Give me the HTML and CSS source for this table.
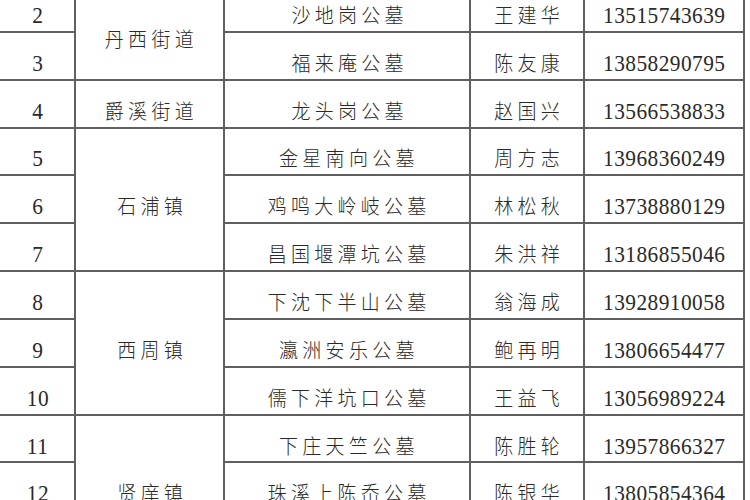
FILE: index.html
```html
<!DOCTYPE html>
<html lang="zh">
<head>
<meta charset="utf-8">
<link rel="stylesheet" href="styles.css">
</head>
<body>
<div class="page">
<table class="list">
<colgroup>
<col class="c1"><col class="c2"><col class="c3"><col class="c4"><col class="c5">
</colgroup>
<tbody>
<tr><td class="num"><span class="t">2</span></td><td class="zh" rowspan="2"><span class="t">丹西街道</span></td><td class="zh"><span class="t">沙地岗公墓</span></td><td class="zh"><span class="t">王建华</span></td><td class="num"><span class="t">13515743639</span></td></tr>
<tr><td class="num"><span class="t">3</span></td><td class="zh"><span class="t">福来庵公墓</span></td><td class="zh"><span class="t">陈友康</span></td><td class="num"><span class="t">13858290795</span></td></tr>
<tr><td class="num"><span class="t">4</span></td><td class="zh"><span class="t">爵溪街道</span></td><td class="zh"><span class="t">龙头岗公墓</span></td><td class="zh"><span class="t">赵国兴</span></td><td class="num"><span class="t">13566538833</span></td></tr>
<tr><td class="num"><span class="t">5</span></td><td class="zh" rowspan="3"><span class="t">石浦镇</span></td><td class="zh"><span class="t">金星南向公墓</span></td><td class="zh"><span class="t">周方志</span></td><td class="num"><span class="t">13968360249</span></td></tr>
<tr><td class="num"><span class="t">6</span></td><td class="zh"><span class="t">鸡鸣大岭岐公墓</span></td><td class="zh"><span class="t">林松秋</span></td><td class="num"><span class="t">13738880129</span></td></tr>
<tr><td class="num"><span class="t">7</span></td><td class="zh"><span class="t">昌国堰潭坑公墓</span></td><td class="zh"><span class="t">朱洪祥</span></td><td class="num"><span class="t">13186855046</span></td></tr>
<tr><td class="num"><span class="t">8</span></td><td class="zh" rowspan="3"><span class="t">西周镇</span></td><td class="zh"><span class="t">下沈下半山公墓</span></td><td class="zh"><span class="t">翁海成</span></td><td class="num"><span class="t">13928910058</span></td></tr>
<tr><td class="num"><span class="t">9</span></td><td class="zh"><span class="t">瀛洲安乐公墓</span></td><td class="zh"><span class="t">鲍再明</span></td><td class="num"><span class="t">13806654477</span></td></tr>
<tr><td class="num"><span class="t">10</span></td><td class="zh"><span class="t">儒下洋坑口公墓</span></td><td class="zh"><span class="t">王益飞</span></td><td class="num"><span class="t">13056989224</span></td></tr>
<tr><td class="num"><span class="t">11</span></td><td class="zh" rowspan="3"><span class="t">贤庠镇</span></td><td class="zh"><span class="t">下庄天竺公墓</span></td><td class="zh"><span class="t">陈胜轮</span></td><td class="num"><span class="t">13957866327</span></td></tr>
<tr><td class="num"><span class="t">12</span></td><td class="zh"><span class="t">珠溪上陈岙公墓</span></td><td class="zh"><span class="t">陈银华</span></td><td class="num"><span class="t">13805854364</span></td></tr>
<tr><td class="num">&nbsp;</td><td class="zh">&nbsp;</td><td class="zh">&nbsp;</td><td class="num">&nbsp;</td></tr>
</tbody>
</table>
</div>
</body>
</html>
```
FILE: styles.css
```css
html, body {
  margin: 0;
  padding: 0;
  background: #ffffff;
}
.page {
  width: 750px;
  height: 500px;
  overflow: hidden;
}
.list {
  border-collapse: collapse;
  table-layout: fixed;
  width: 744px;
  margin-top: -17px;
  margin-left: -1px;
}
.c1 { width: 75px; }
.c2 { width: 149px; }
.c3 { width: 246px; }
.c4 { width: 114px; }
.c5 { width: 160px; }
.list td {
  border: 2px solid #606060;
  height: 47.85px;
  box-sizing: border-box;
  padding: 14px 0 0 0;
  text-align: center;
  vertical-align: middle;
  line-height: 26px;
  color: #2a2a2a;
  white-space: nowrap;
  overflow: hidden;
}
.list tr:first-child td { border-top-color: transparent; }
.list td:first-child { border-left-color: transparent; }
.t {
  display: inline-block;
  transform: scaleX(0.89);
  transform-origin: center;
}
.num {
  font-family: "Liberation Serif", serif;
  font-size: 24px;
  letter-spacing: 0.5px;
}
.num .t { padding-left: 0.5px; }
.zh {
  font-family: "Noto Sans CJK SC", sans-serif;
  font-size: 20px;
  font-weight: 300;
  letter-spacing: 4.5px;
  color: #3a3a3a;
}
.zh .t {
  padding-left: 4.5px;
  transform: scaleX(0.95);
}
```
